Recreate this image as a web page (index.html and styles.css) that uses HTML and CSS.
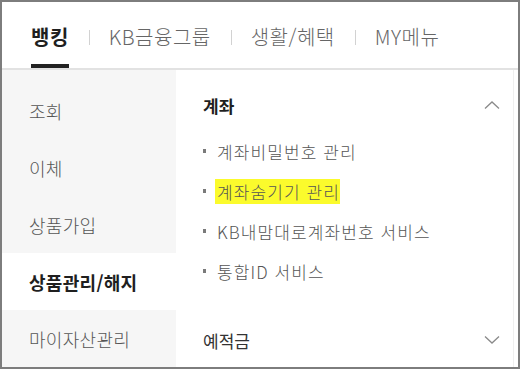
FILE: index.html
```html
<!DOCTYPE html>
<html lang="ko">
<head>
<meta charset="utf-8">
<link rel="stylesheet" href="styles.css">
</head>
<body>
<div class="frame">
  <nav class="tabs">
    <a class="tab active">뱅킹</a>
    <span class="sep"></span>
    <a class="tab">KB금융그룹</a>
    <span class="sep"></span>
    <a class="tab">생활/혜택</a>
    <span class="sep"></span>
    <a class="tab">MY메뉴</a>
  </nav>
  <div class="content">
    <ul class="side">
      <li class="side-item">조회</li>
      <li class="side-item">이체</li>
      <li class="side-item">상품가입</li>
      <li class="side-item current">상품관리/해지</li>
      <li class="side-item">마이자산관리</li>
    </ul>
    <div class="panel">
      <section class="group open">
        <div class="group-head">
          <h2 class="group-title strong">계좌</h2>
          <svg class="chev" width="16" height="8" viewBox="0 0 16 8"><path d="M1 7.5 L8 1 L15 7.5" fill="none" stroke="#8a8a8a" stroke-width="1.3"/></svg>
        </div>
        <ul class="links">
          <li class="link">계좌비밀번호 관리</li>
          <li class="link"><span class="mark">계좌숨기기 관리</span></li>
          <li class="link">KB내맘대로계좌번호 서비스</li>
          <li class="link">통합ID 서비스</li>
        </ul>
      </section>
      <section class="group">
        <div class="group-head">
          <h2 class="group-title">예적금</h2>
          <svg class="chev" width="16" height="8" viewBox="0 0 16 8"><path d="M1 0.5 L8 7 L15 0.5" fill="none" stroke="#8a8a8a" stroke-width="1.3"/></svg>
        </div>
      </section>
    </div>
  </div>
</div>
</body>
</html>
```

FILE: styles.css
```css
* { box-sizing: border-box; }
html, body { margin: 0; padding: 0; background: #fff; }
body {
  font-family: "Noto Sans CJK KR", "Noto Sans", "Liberation Sans", sans-serif;
  color: #333;
}
.frame {
  width: 520px;
  height: 369px;
  border: 2px solid #7d7d7d;
  overflow: hidden;
  display: flex;
  flex-direction: column;
}
.tabs {
  flex: none;
  height: 68px;
  display: flex;
  align-items: stretch;
  padding-left: 29px;
  border-bottom: 2px solid #e2e2e2;
}
.tab {
  display: flex;
  align-items: center;
  padding-top: 7px;
  border-bottom: 4px solid transparent;
  font-size: 20px;
  font-weight: 300;
  color: #666;
  letter-spacing: 0.5px;
  white-space: nowrap;
}
.tab.active {
  color: #1f1f1f;
  font-weight: 700;
  border-bottom-color: #222;
}
.sep {
  align-self: center;
  margin: 5px 19px 0 20px;
  width: 1px;
  height: 15px;
  background: #d2d2d2;
}
.content {
  flex: 1;
  display: flex;
  min-height: 0;
}
.side {
  list-style: none;
  margin: 0;
  padding: 12px 0 0 0;
  width: 174px;
  flex: none;
  background: #f6f6f6;
}
.side-item {
  height: 57px;
  display: flex;
  align-items: center;
  padding-left: 27px;
  font-size: 18px;
  font-weight: 300;
  letter-spacing: 0.3px;
  color: #555;
}
.side-item.current {
  background: #fff;
  color: #1f1f1f;
  font-weight: 700;
}
.panel {
  flex: 1;
  padding: 0 15px 0 27px;
  margin-right: 4px;
  border-right: 1px solid #efefef;
}
.group-head {
  height: 24px;
  display: flex;
  align-items: center;
  justify-content: space-between;
}
.group.open .group-head { margin-top: 23px; }
.group-title {
  margin: 0;
  font-size: 17px;
  font-weight: 400;
  color: #333;
}
.group-title.strong { font-weight: 700; color: #1f1f1f; }
.chev { flex: none; margin-right: -2px; }
.links {
  list-style: none;
  margin: 0;
  padding: 14px 0 37px 0;
}
.link {
  height: 40px;
  display: flex;
  align-items: center;
  font-size: 17px;
  font-weight: 300;
  letter-spacing: 1.1px;
  color: #555;
  white-space: nowrap;
}
.link::before {
  content: "";
  width: 3px;
  height: 4px;
  background: #7a7a7a;
  margin-right: 11px;
  flex: none;
}
.mark {
  background: #fbfb2c;
  color: #555;
  padding-left: 2px;
  margin-left: -2px;
}
```
